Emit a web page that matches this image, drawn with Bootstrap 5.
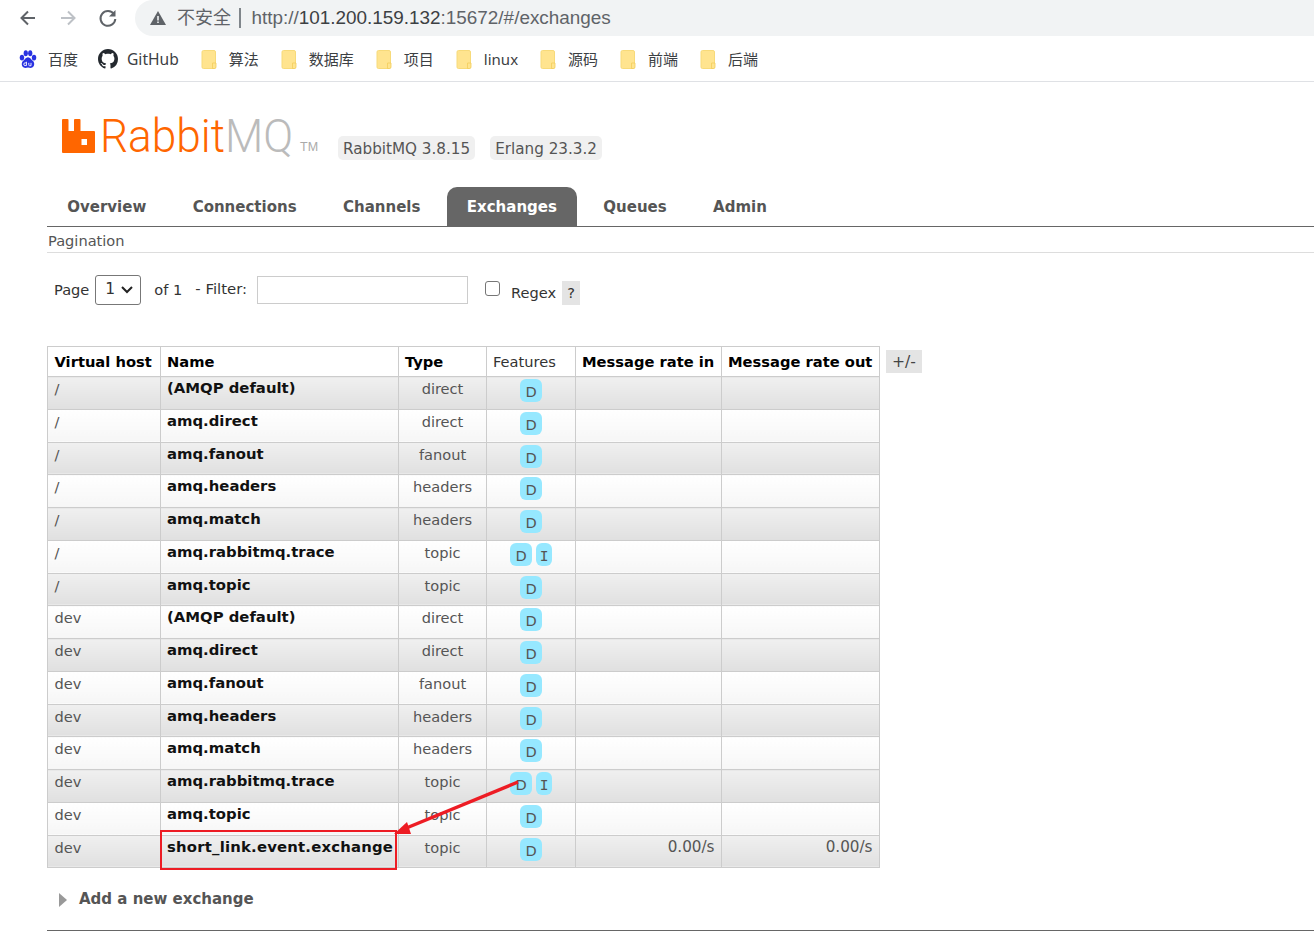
<!DOCTYPE html>
<html lang="zh-CN">
<head>
<meta charset="UTF-8">
<title>RabbitMQ Management</title>
<link href="https://cdn.jsdelivr.net/npm/bootstrap@5.3.3/dist/css/bootstrap.min.css" rel="stylesheet">
<style>
html, body { height: 936px; overflow: hidden; }
body { background: #fff; font-family: "DejaVu Sans", Verdana, sans-serif; color: #444; position: relative; }
.toolbar-row { height: 36px; padding-left: 17px; }
.tool-btn { width: 22px; height: 22px; margin-right: 18px; flex: none; }
.omnibox { height: 36px; flex: 1; background: #f1f3f4; border-radius: 18px 0 0 18px; margin-left: -2px; padding-left: 15px; font-family: "Liberation Sans", "Noto Sans CJK SC", sans-serif; font-size: 18.9px; color: #5f6368; }
.omni-warn { margin-right: 11px; }
.omni-cn { font-size: 18px; }
.omni-sep { margin: 0 11px 0 8px; width: 1.5px; height: 20px; background: #80868b; }
.omni-host { color: #3c4043; }
.omni-light { color: #5f6368; }
.bookmarks { height: 46px; padding-left: 19px; padding-top: 2px; border-bottom: 1px solid #dfe1e5; font-family: "Noto Sans", "Noto Sans CJK SC", sans-serif; font-size: 15px; color: #3c4043; }
.bm-item { display: flex; align-items: center; margin-right: 22px; }
.bm-item svg { flex: none; }
.bm-baidu { margin-right: 20px; }
.bm-baidu svg { margin-right: 11px; }
.bm-hub { font-size: 15.6px; }
.bm-hub svg { margin-right: 9px; }
.bm-folder { width: 17px; height: 20px; margin-right: 11px; }
.page-body { padding: 0 0 0 47px; font-size: 14.6px; }
.brand-row { height: 105px; }
.logo-box { width: 261px; height: 40px; margin: 34px 15px 0 15px; position: relative; }
.logo-icon { flex: none; margin-right: 5px; }
.logo-word { font-family: Roboto, "Liberation Sans", sans-serif; font-weight: 300; font-size: 47px; line-height: 40px; color: #f60; display: inline-block; transform: scaleX(.94); transform-origin: left center; white-space: nowrap; }
.logo-grey { color: #bbb; }
.logo-tm { position: absolute; left: 238px; bottom: -1px; font-family: "Liberation Sans", sans-serif; font-size: 12.5px; color: #aaa; }
.ver-pill { background: #f0f0f0; border-radius: 5px; padding: 0 5px; height: 24px; line-height: 26px; margin: 54px 15px 0 0; font-size: 15.2px; color: #555; }
.tab-bar { height: 40px; border-bottom: 1px solid #666; padding: 0 0 0 .5px; list-style: none; margin: 0; }
.tab-bar li { height: 39px; line-height: 40px; padding: 0 19.7px; margin-right: 7px; font-weight: 700; font-size: 15px; border-radius: 10px 10px 0 0; color: #555; }
.tab-bar li.is-on { background: #666; color: #fff; }
.section-name { height: 26px; line-height: 27px; border-bottom: 1px solid #ddd; font-size: 14.6px; color: #555; padding-left: 1px; }
.filter-row { height: 93px; padding: 22px 0 0 7px; color: #333; font-size: 14.6px; }
.page-pick { width: 46px; height: 30px; border: 1px solid #777; border-radius: 3px; padding: 0 0 0 9px; margin: 0 13px 0 6px; font-size: 15.5px; color: #333; display: flex; align-items: center; justify-content: space-between; }
.filter-label { margin: -2px 0 0 13px; font-size: 14.9px; }
.filter-in { width: 211px; height: 28px; border: 1px solid #ccc; margin: 0 17px 0 10px; }
.rgx-box { width: 15px; height: 15px; border: 1px solid #767676; border-radius: 3px; margin-right: 11px; margin-top: -4px; }
.rgx-text { margin-top: 6px; }
.rgx-help { width: 18px; height: 24px; background: #e4e4e4; line-height: 24px; text-align: center; margin: 6px 0 0 6px; }
.ex-wrap { align-items: flex-start; }
table.ex-table { table-layout: fixed; width: 832px; border-collapse: collapse; font-size: 14.6px; color: #555; margin: 0; }
.ex-table th, .ex-table td { border: 1px solid #ccc; padding: 0 6.5px; vertical-align: top; }
.ex-table thead th { height: 30px; line-height: 27px; padding: 1px 6px 0; font-size: 14.7px; font-weight: 700; color: #000; background: #fff; white-space: nowrap; }
.ex-table thead th:first-child { padding-left: 6.5px; }
.ex-table thead th.th-plain { font-weight: 400; font-size: 14.6px; color: #333; }
.ex-table tbody td { height: 32.75px; line-height: 23px; white-space: nowrap; }
.ex-table tbody tr:nth-child(odd) td { background: linear-gradient(#f0f0f0, #e0e0e0); }
.ex-table tbody tr:nth-child(even) td { background: linear-gradient(#fff, #f6f6f6); }
.ex-table td.cell-name { font-weight: 700; font-size: 14.85px; color: #111; padding-left: 6px; }
.ex-table td.cell-hot { letter-spacing: .2px; }
.ex-table td.cell-c { text-align: center; }
.ex-table td.cell-r { text-align: right; font-size: 15.2px; }
.w-vh { width: 113px; } .w-nm { width: 238px; } .w-ty { width: 88px; } .w-fe { width: 89px; } .w-in { width: 146px; } .w-ou { width: 158px; }
.feat { display: inline-block; background: #96e8ff; border-radius: 6px; height: 23px; line-height: 25px; padding: 0 5.5px; margin: 2px 2px 0; color: #555; font-size: 14.6px; vertical-align: top; }
.feat-i { font-family: "DejaVu Sans Mono", monospace; padding: 0 3.6px; }
.col-toggle { width: 36px; height: 23px; line-height: 24px; text-align: center; background: #e4e4e4; margin: 4px 0 0 6px; color: #444; font-size: 15.6px; }
.add-row { margin-top: 21px; height: 42px; padding: 0 0 21px 12px; border-bottom: 1px solid #666; width: 100%; font-weight: 700; font-size: 15px; color: #555; }
.add-tri { width: 0; height: 0; border-left: 8px solid #999; border-top: 7px solid transparent; border-bottom: 7px solid transparent; margin-right: 12px; margin-top: 1px; }
.anno { position: absolute; left: 0; top: 0; width: 1314px; height: 936px; pointer-events: none; }
</style>
</head>
<body>
<svg width="0" height="0" class="position-absolute">
  <symbol id="folder" viewBox="0 0 17 20">
    <rect x="1" y=".5" width="13.500" height="18" rx="1.500" fill="#ffe48f" stroke="#f7da7a"/>
    <path d="M11.500 13h3.500v4a1.500 1.500 0 0 1-1.500 1.500h-2z" fill="#ffe48f" stroke="#f2cd5c" stroke-width=".8"/>
  </symbol>
</svg>
<div class="d-flex align-items-center toolbar-row">
  <svg class="tool-btn" viewBox="0 0 22 22"><path d="M18 11H5M11 4.500 4.500 11l6.500 6.500" fill="none" stroke="#5f6368" stroke-width="2"/></svg>
  <svg class="tool-btn" viewBox="0 0 22 22"><path d="M4 11h13M11 4.500l6.500 6.500-6.500 6.500" fill="none" stroke="#bdc1c6" stroke-width="2"/></svg>
  <svg class="tool-btn" viewBox="0 0 22 22"><path d="M17 7.200A7.400 7.400 0 1 0 18.300 12" fill="none" stroke="#5f6368" stroke-width="2"/><path d="M18.500 3v6.500H12z" fill="#5f6368"/></svg>
  <div class="omnibox d-flex align-items-center">
    <svg class="omni-warn" width="16" height="14" viewBox="0 0 16 14"><path d="M8 0 16 14H0z" fill="#5f6368"/><path d="M7.200 5h1.600v4.500H7.200zM7.200 10.500h1.600V12H7.200z" fill="#f1f3f4"/></svg>
    <span class="omni-cn">不安全</span><span class="omni-sep"></span>
    <span><span class="omni-light">http://</span><span class="omni-host">101.200.159.132</span><span class="omni-light">:15672/#/exchanges</span></span>
  </div>
</div>
<div class="d-flex align-items-center bookmarks">
  <div class="bm-item bm-baidu"><svg width="18" height="19" viewBox="1 0 16 17"><g fill="#2932e1"><ellipse cx="3.600" cy="6.800" rx="2" ry="2.600"/><ellipse cx="7" cy="2.900" rx="1.900" ry="2.600"/><ellipse cx="11" cy="2.900" rx="1.900" ry="2.600"/><ellipse cx="14.400" cy="6.800" rx="2" ry="2.600"/><path d="M9 6.500c2 0 2.800 2.200 4.200 3.200 2.300 1.700 1.700 6.300-1.700 6.300-1 0-1.600-.4-2.500-.4s-1.500.4-2.500.4c-3.400 0-4-4.600-1.700-6.300C6.200 8.700 7 6.500 9 6.500z"/></g><path d="M7.600 10.500v3.400H6.400a1.200 1.200 0 0 1 0-2.400h1.200M9.700 11.500v1.600c0 1 .6 1 1 1h1v-2.600" fill="none" stroke="#fff" stroke-width=".8"/></svg>百度</div>
  <div class="bm-item bm-hub"><svg width="20" height="20" viewBox="0 0 16 16"><path fill="#24292f" d="M8 0C3.580 0 0 3.580 0 8c0 3.540 2.290 6.530 5.470 7.590.4.070.55-.17.55-.38 0-.19-.01-.82-.01-1.490-2.010.37-2.530-.49-2.690-.94-.09-.23-.48-.94-.82-1.130-.28-.15-.68-.52-.01-.53.63-.01 1.080.58 1.230.82.720 1.210 1.870.87 2.330.66.070-.52.280-.87.510-1.070-1.780-.2-3.640-.89-3.640-3.950 0-.87.310-1.590.820-2.150-.08-.2-.360-1.020.080-2.120 0 0 .670-.21 2.200.82.640-.18 1.320-.27 2-.27s1.360.09 2 .27c1.530-1.040 2.200-.82 2.200-.82.440 1.100.160 1.920.080 2.120.510.560.820 1.270.820 2.150 0 3.070-1.870 3.750-3.650 3.950.290.250.540.730.540 1.480 0 1.070-.01 1.930-.01 2.200 0 .210.150.460.550.380A8.010 8.010 0 0 0 16 8c0-4.420-3.580-8-8-8z"/></svg>GitHub</div>
  <div class="bm-item"><svg class="bm-folder"><use href="#folder"/></svg>算法</div>
  <div class="bm-item"><svg class="bm-folder"><use href="#folder"/></svg>数据库</div>
  <div class="bm-item"><svg class="bm-folder"><use href="#folder"/></svg>项目</div>
  <div class="bm-item"><svg class="bm-folder"><use href="#folder"/></svg>linux</div>
  <div class="bm-item"><svg class="bm-folder"><use href="#folder"/></svg>源码</div>
  <div class="bm-item"><svg class="bm-folder"><use href="#folder"/></svg>前端</div>
  <div class="bm-item"><svg class="bm-folder"><use href="#folder"/></svg>后端</div>
</div>

<div class="page-body">
  <div class="d-flex brand-row">
    <div class="logo-box d-flex align-items-center">
      <svg class="logo-icon" width="33" height="34" viewBox="0 0 33 34"><path fill="#f60" d="M0 1a1 1 0 0 1 1-1h4.500a1 1 0 0 1 1 1v11h5.500V1a1 1 0 0 1 1-1h4.500a1 1 0 0 1 1 1v11h13.500a1 1 0 0 1 1 1v20a1 1 0 0 1-1 1H1a1 1 0 0 1-1-1z"/><rect x="19.500" y="20" width="5.500" height="6" fill="#fff"/></svg>
      <span class="logo-word">Rabbit<span class="logo-grey">MQ</span></span>
      <span class="logo-tm">TM</span>
    </div>
    <div class="ver-pill">RabbitMQ 3.8.15</div>
    <div class="ver-pill">Erlang 23.3.2</div>
  </div>
  <ul class="d-flex tab-bar">
    <li>Overview</li><li>Connections</li><li>Channels</li><li class="is-on">Exchanges</li><li>Queues</li><li>Admin</li>
  </ul>
  <div class="section-name">Pagination</div>
  <div class="filter-row">
    <div class="d-flex align-items-center">
      <span>Page</span>
      <div class="page-pick"><span>1</span><svg width="24" height="14" viewBox="0 0 24 14"><path d="M6 4l5 5 5-5" fill="none" stroke="#222" stroke-width="2"/></svg></div>
      <span>of 1</span>
      <span class="filter-label">- Filter:</span>
      <div class="filter-in"></div>
      <div class="rgx-box"></div>
      <span class="rgx-text">Regex</span>
      <div class="rgx-help">?</div>
    </div>
  </div>
  <div class="d-flex ex-wrap">
    <table class="ex-table">
      <colgroup><col class="w-vh"><col class="w-nm"><col class="w-ty"><col class="w-fe"><col class="w-in"><col class="w-ou"></colgroup>
      <thead><tr><th>Virtual host</th><th>Name</th><th>Type</th><th class="th-plain">Features</th><th>Message rate in</th><th>Message rate out</th></tr></thead>
      <tbody id="ex-rows"></tbody>
    </table>
    <div class="col-toggle">+/-</div>
  </div>
  <div class="d-flex align-items-center add-row"><span class="add-tri"></span>Add a new exchange</div>
</div>

<svg class="anno" viewBox="0 0 1314 936">
  <rect x="161" y="831" width="235" height="38" fill="none" stroke="#ed1c24" stroke-width="2"/>
  <path d="M518 782 404 829" stroke="#ed1c24" stroke-width="3.500" fill="none"/>
  <path d="M394 834 407 822 411 834z" fill="#ed1c24"/>
</svg>

<script>
  const rows = [
    ['/', '(AMQP default)', 'direct', 'D'],
    ['/', 'amq.direct', 'direct', 'D'],
    ['/', 'amq.fanout', 'fanout', 'D'],
    ['/', 'amq.headers', 'headers', 'D'],
    ['/', 'amq.match', 'headers', 'D'],
    ['/', 'amq.rabbitmq.trace', 'topic', 'DI'],
    ['/', 'amq.topic', 'topic', 'D'],
    ['dev', '(AMQP default)', 'direct', 'D'],
    ['dev', 'amq.direct', 'direct', 'D'],
    ['dev', 'amq.fanout', 'fanout', 'D'],
    ['dev', 'amq.headers', 'headers', 'D'],
    ['dev', 'amq.match', 'headers', 'D'],
    ['dev', 'amq.rabbitmq.trace', 'topic', 'DI'],
    ['dev', 'amq.topic', 'topic', 'D'],
    ['dev', 'short_link.event.exchange', 'topic', 'D', '0.00/s', '0.00/s']
  ];
  document.getElementById('ex-rows').innerHTML = rows.map(r => `<tr>
    <td>${r[0]}</td><td class="cell-name${r[4] ? ' cell-hot' : ''}">${r[1]}</td><td class="cell-c">${r[2]}</td>
    <td class="cell-c">${r[3].split('').map(f => `<span class="feat${f === 'I' ? ' feat-i' : ''}">${f}</span>`).join('')}</td>
    <td class="cell-r">${r[4] || ''}</td><td class="cell-r">${r[5] || ''}</td></tr>`).join('');
</script>
<script src="https://cdn.jsdelivr.net/npm/bootstrap@5.3.3/dist/js/bootstrap.bundle.min.js"></script>
</body>
</html>
